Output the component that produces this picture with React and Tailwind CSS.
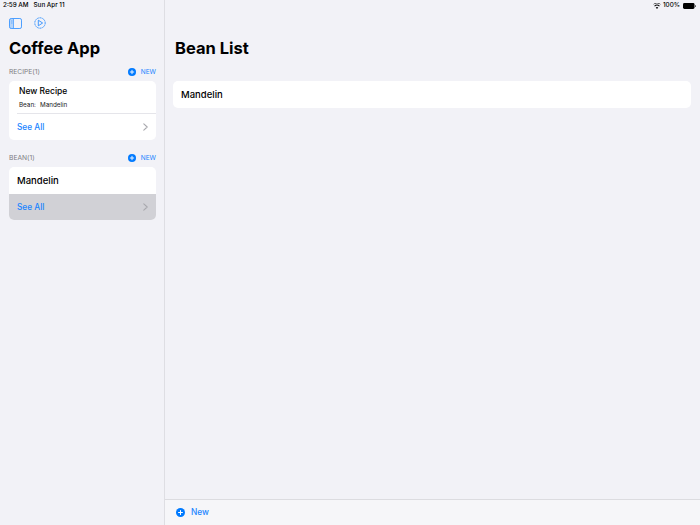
import React from 'react'

const font = { fontFamily: 'Inter, "Liberation Sans", sans-serif' }

function PlusCircle({ size = 8 }) {
  return (
    <svg width={size} height={size} viewBox="0 0 16 16" className="shrink-0">
      <circle cx="8" cy="8" r="8" fill="#007aff" />
      <path d="M8 4.5v7M4.5 8h7" stroke="#fff" strokeWidth="1.8" strokeLinecap="round" />
    </svg>
  )
}

function Chevron() {
  return (
    <svg width="5" height="8" viewBox="0 0 5 8" fill="none" className="shrink-0">
      <path d="M0.8 0.8L4.2 4L0.8 7.2" stroke="#a9a9ae" strokeWidth="1.1" strokeLinecap="round" strokeLinejoin="round" />
    </svg>
  )
}

function SectionHead({ label }) {
  return (
    <div className="flex items-center justify-between h-[13px]">
      <span className="text-[6.7px] text-[#7d7d82]">{label}</span>
      <span className="flex items-center gap-[5px] text-[6.5px] text-[#1a85ff]">
        <span className="-mt-[1px]"><PlusCircle /></span>
        NEW
      </span>
    </div>
  )
}

function SeeAll({ active }) {
  return (
    <div className={`flex items-center justify-between h-[26px] pl-[8px] pr-[8px] ${active ? 'bg-[#d1d1d6]' : ''}`}>
      <span className="text-[8.3px] font-medium text-[#1a85ff]">See All</span>
      <Chevron />
    </div>
  )
}

export default function App() {
  return (
    <div style={font} className="flex w-[700px] h-[525px] overflow-hidden bg-[#f2f2f7] text-black">
      <aside className="flex flex-col w-[165px] shrink-0 border-r border-[#dedee3] pl-[9px] pr-[8px]">
        <div className="flex items-center h-[11px] -ml-[6px] text-[6.3px] font-medium gap-[5px] pt-[1px]">
          <span>2:59 AM</span>
          <span>Sun Apr 11</span>
        </div>
        <div className="flex items-center gap-[12px] mt-[6px] h-[12px]">
          <svg width="13" height="11" viewBox="0 0 13 11" fill="none">
            <rect x="0.5" y="0.5" width="12" height="10" rx="1.6" stroke="#4d9fff" />
            <rect x="1" y="1" width="3.5" height="9" fill="#007aff" fillOpacity="0.25" />
            <path d="M4.5 1v9" stroke="#4d9fff" strokeWidth="0.8" />
            <path d="M2 3h1.5M2 5h1.5" stroke="#4d9fff" strokeWidth="0.7" />
          </svg>
          <svg width="12" height="12" viewBox="0 0 12 12" fill="none">
            <circle cx="6" cy="6" r="5.2" stroke="#2f8fff" strokeWidth="1" strokeDasharray="1.2 0.5" />
            <path d="M4.3 3.2L8.6 6L4.3 8.8Z" stroke="#2f8fff" strokeWidth="0.9" strokeLinejoin="round" />
          </svg>
        </div>
        <h1 className="mt-[8px] h-[22px] text-[16.5px] leading-[22px] font-bold">Coffee App</h1>
        <div className="mt-[7px]">
          <SectionHead label="RECIPE(1)" />
        </div>
        <div className="mt-[2px] rounded-[5px] bg-white overflow-hidden">
          <div className="h-[33px] ml-[8px] pl-[2px] pt-[4px] border-b border-[#e5e5ea]">
            <div className="text-[8.5px] leading-[12px] font-medium">New Recipe</div>
            <div className="flex gap-[4px] mt-[4px] text-[6.3px] leading-[9px] text-[#222]">
              <span>Bean:</span>
              <span>Mandelin</span>
            </div>
          </div>
          <SeeAll />
        </div>
        <div className="mt-[12px]">
          <SectionHead label="BEAN(1)" />
        </div>
        <div className="mt-[2px] rounded-[5px] bg-white overflow-hidden">
          <div className="flex items-center h-[27px] pl-[8px] pt-[1px] text-[9.5px] font-medium">Mandelin</div>
          <SeeAll active />
        </div>
      </aside>
      <main className="flex flex-col flex-1 min-w-0">
        <div className="flex items-center justify-end h-[11px] pt-[1px] pr-[4px] gap-[2px] text-[6.3px] font-medium">
          <svg width="8" height="6" viewBox="0 0 16 12">
            <path d="M8 12L5.5 9a3.6 3.6 0 0 1 5 0ZM3.8 7.2a6 6 0 0 1 8.4 0l1.4-1.6a8.2 8.2 0 0 0-11.2 0ZM0 3.6a11.5 11.5 0 0 1 16 0L14.6 2A9.8 9.8 0 0 0 1.4 2Z" fill="#000" />
          </svg>
          <span>100%</span>
          <svg width="13" height="6" viewBox="0 0 13 6" className="ml-[1px]">
            <rect x="0" y="0" width="11.5" height="6" rx="1.4" fill="#000" />
            <rect x="12" y="2" width="1" height="2" rx="0.5" fill="#555" />
          </svg>
        </div>
        <h2 className="mt-[26px] ml-[10px] h-[22px] text-[16.5px] leading-[22px] font-bold">Bean List</h2>
        <div className="flex items-center h-[27px] mt-[22px] ml-[8px] mr-[9px] pl-[8px] pt-[1px] rounded-[5px] bg-white text-[9.5px] font-medium">
          Mandelin
        </div>
        <div className="flex-1" />
        <div className="flex items-center gap-[6px] h-[26px] pl-[11px] border-t border-[#dcdce0] bg-[#f6f6f9] text-[8.3px] font-medium text-[#1a85ff]">
          <PlusCircle size={9} />
          New
        </div>
      </main>
    </div>
  )
}
